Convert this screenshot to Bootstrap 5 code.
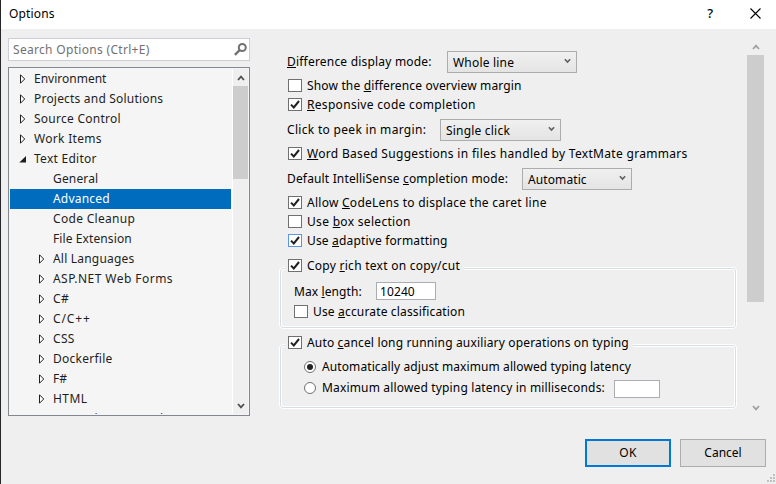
<!DOCTYPE html>
<html lang="en">
<head>
<meta charset="utf-8">
<title>Options</title>
<meta name="viewport" content="width=device-width, initial-scale=1">
<link href="https://cdn.jsdelivr.net/npm/bootstrap@5.3.0/dist/css/bootstrap.min.css" rel="stylesheet">
<style>
body{font-family:"Noto Sans","Open Sans",sans-serif;font-size:12px;line-height:19px;letter-spacing:.2px;color:#000;background:#efefef}
.dialog{width:776px;height:484px;border-left:1px solid #26262a;background:#efefef}
.titlebar{height:29px;padding:0 15px 2px 8px}
.titlebar svg{display:block}
.help{font-size:13px;font-weight:500;margin-right:33px}
.search{height:23px;border:1px solid #ccceda;background:#fff;color:#717171;padding:0 2px 0 4px}
.side{width:242px;margin-left:7px;padding-top:9px}
.tree{height:349px;margin-top:6px;border:1px solid #828790;background:#f5f5f5;padding:1px}
.tree-list{width:221px;height:345px;color:#1e1e1e}
.tree-item{height:20px;line-height:20px;padding-left:9px;white-space:nowrap}
.tree-item svg{width:9px;height:10px;margin-right:6px;flex:none}
.tree-item.child{padding-left:28px}
.tree-item.chosen{background:#006cbe;color:#fff}
.tree-bar{width:16px;margin-left:1px;border-left:1px solid #fff;background:#efefef;padding:6px 0 5px}
.tree-bar .thumb{width:15px;height:93px;margin-top:5px;background:#cdcdcd}
.options{width:458px;margin-left:29px;padding-top:22px}
.line{height:19px;padding-left:9px;white-space:nowrap}
.line>span:last-child{padding-bottom:1px}
.combo-line{height:22px;padding-left:8px;white-space:nowrap}
.combo-line>span{padding-bottom:2px}
.after-combo{margin-top:3px}
.before-combo{margin-top:5px}
.lbl-diff{width:160px}.lbl-peek{width:153px}.lbl-sense{width:235px}
.combo{height:22px;border:1px solid #acacac;background:linear-gradient(#f0f0f0,#e4e4e4);padding:0 5px}
.combo-a{width:130px}.combo-b{width:121px}.combo-c{width:110px}
.combo svg{margin-bottom:3px}
.box{width:14px;height:13px;border:1px solid #707070;background:#fff;margin-right:5px;flex:none}
.box svg{display:block;width:12px;height:11px}
.box.hot{border-color:#5a96e8}
.radio{width:12px;height:12px;border:1px solid #707070;border-radius:50%;background:#fff;margin-right:6px;flex:none}
.radio i{width:6px;height:6px;border-radius:50%;background:#212121}
.radio-line{height:21px}
.group-title{position:relative;z-index:1;width:max-content;margin-left:6px;padding:0 4px 0 3px;background:#efefef}
.gap-a{margin-top:6px}.gap-b{margin-top:4px}
.group-box{margin-top:-8px;border:1px solid #fff;border-radius:4px;box-shadow:inset 0 0 0 1px #d5dfe5,inset 0 0 0 2px #fff;white-space:nowrap}
.group-a{height:62px;padding:14px 0 0 14px}
.group-b{height:65px;padding:11px 0 0 24px}
.field{height:18px;border:1px solid #abadb3;background:#fff;padding-left:3px;line-height:17px}
.field-line{height:18px}
.accurate{height:19px;margin-top:2px}
.lbl-max{width:82px}
.field-a{width:60px}.field-b{width:46px;margin-top:3px}
.lbl-ms{width:292px}
.pane-bar{width:17px;margin-left:10px;padding-top:15px}
.pane-bar .thumb{width:17px;height:247px;margin:5px 0 103px;background:#cdcdcd}
.dlg-btn{width:86px;height:28px;padding:0;border:1px solid #adadad;border-radius:0;background:#e1e1e1;color:#000;font-size:12px;line-height:24px}
.dlg-btn.primary{border:2px solid #0078d7}
.main-area{height:410px}
.footer-bar{height:45px;padding-right:10px;gap:9px;position:relative}
.grip{position:absolute;right:0;bottom:1px}
.t0{letter-spacing:0}.t1{letter-spacing:.1px}.t15{letter-spacing:.16px}.t25{letter-spacing:.26px}.t3{letter-spacing:.31px}.t4{letter-spacing:.45px}.t9{letter-spacing:.9px}
u{text-underline-offset:1px;text-decoration-thickness:1px;text-decoration-skip-ink:none}
</style>
<script src="https://cdn.jsdelivr.net/npm/bootstrap@5.3.0/dist/js/bootstrap.bundle.min.js"></script>
</head>
<body>
<svg class="d-none">
  <symbol id="closed" viewBox="0 0 9 10"><path d="M1.500.8v8.400l4.200-4.200z" fill="#fff" stroke="#1e1e1e"/></symbol>
  <symbol id="open" viewBox="0 0 9 10"><path d="M7 2v6.500H.3z" fill="#1e1e1e"/></symbol>
  <symbol id="tick" viewBox="0 0 12 11"><path d="M2 5.600 4.800 8.400 10 2" fill="none" stroke="#212121" stroke-width="2"/></symbol>
  <symbol id="down" viewBox="0 0 8 6"><path d="M1 1 4 4.300 7 1" fill="none" stroke="currentColor" stroke-width="1.800"/></symbol>
  <symbol id="up" viewBox="0 0 8 6"><path d="M1 5 4 1.700 7 5" fill="none" stroke="currentColor" stroke-width="1.800"/></symbol>
</svg>
<div class="dialog d-flex flex-column overflow-hidden">
  <header class="titlebar bg-white d-flex align-items-center">
    <span class="t15 me-auto">Options</span>
    <span class="help t0">?</span>
    <svg class="ms-1" width="11" height="11" viewBox="0 0 11 11"><path d="M.5.5l10 10M10.500.5l-10 10" stroke="#000" stroke-width="1.100"/></svg>
  </header>
  <main class="main-area d-flex">
    <aside class="side">
      <div class="search d-flex align-items-center justify-content-between">
        <span class="t3">Search Options (Ctrl+E)</span>
        <svg width="13" height="13" viewBox="0 0 13 13" fill="none" stroke="#717171"><circle cx="8.300" cy="4.500" r="3.500" stroke-width="2"/><path d="M5.600 7.200.9 11.800" stroke-width="2.400"/></svg>
      </div>
      <div class="tree d-flex">
        <div class="tree-list overflow-hidden">
          <div class="tree-item d-flex align-items-center"><svg><use href="#closed"/></svg><span class="t0">Environment</span></div>
          <div class="tree-item d-flex align-items-center"><svg><use href="#closed"/></svg><span>Projects and Solutions</span></div>
          <div class="tree-item d-flex align-items-center"><svg><use href="#closed"/></svg><span class="t25">Source Control</span></div>
          <div class="tree-item d-flex align-items-center"><svg><use href="#closed"/></svg><span class="t3">Work Items</span></div>
          <div class="tree-item d-flex align-items-center"><svg><use href="#open"/></svg><span class="t25">Text Editor</span></div>
          <div class="tree-item child d-flex align-items-center"><svg></svg><span class="t15">General</span></div>
          <div class="tree-item child chosen d-flex align-items-center"><svg></svg><span>Advanced</span></div>
          <div class="tree-item child d-flex align-items-center"><svg></svg><span class="t3">Code Cleanup</span></div>
          <div class="tree-item child d-flex align-items-center"><svg></svg><span class="t1">File Extension</span></div>
          <div class="tree-item child d-flex align-items-center"><svg><use href="#closed"/></svg><span>All Languages</span></div>
          <div class="tree-item child d-flex align-items-center"><svg><use href="#closed"/></svg><span class="t4">ASP.NET Web Forms</span></div>
          <div class="tree-item child d-flex align-items-center"><svg><use href="#closed"/></svg><span class="t3">C#</span></div>
          <div class="tree-item child d-flex align-items-center"><svg><use href="#closed"/></svg><span class="t9">C/C++</span></div>
          <div class="tree-item child d-flex align-items-center"><svg><use href="#closed"/></svg><span class="t3">CSS</span></div>
          <div class="tree-item child d-flex align-items-center"><svg><use href="#closed"/></svg><span class="t25">Dockerfile</span></div>
          <div class="tree-item child d-flex align-items-center"><svg><use href="#closed"/></svg><span class="t0">F#</span></div>
          <div class="tree-item child d-flex align-items-center"><svg><use href="#closed"/></svg><span class="t4">HTML</span></div>
          <div class="tree-item child d-flex align-items-center"><svg></svg><span>JavaScript/TypeScript</span></div>
        </div>
        <div class="tree-bar d-flex flex-column align-items-center">
          <svg width="8" height="6" color="#505050"><use href="#up"/></svg>
          <div class="thumb"></div>
          <svg class="mt-auto" width="8" height="6" color="#505050"><use href="#down"/></svg>
        </div>
      </div>
    </aside>
    <section class="options">
      <div class="combo-line d-flex align-items-center"><span class="lbl-diff"><u>D</u>ifference display mode:</span>
        <div class="combo combo-a d-flex align-items-center justify-content-between"><span>Whole line</span><svg width="7" height="6" color="#606060"><use href="#down"/></svg></div></div>
      <div class="line d-flex align-items-center after-combo"><span class="box"></span><span class="t15">Show the <u>d</u>ifference overview margin</span></div>
      <div class="line d-flex align-items-center"><span class="box"><svg><use href="#tick"/></svg></span><span class="t3"><u>R</u>esponsive code completion</span></div>
      <div class="combo-line d-flex align-items-center before-combo"><span class="lbl-peek t3">Click to peek in margin:</span>
        <div class="combo combo-b d-flex align-items-center justify-content-between"><span>Single click</span><svg width="7" height="6" color="#606060"><use href="#down"/></svg></div></div>
      <div class="line d-flex align-items-center after-combo"><span class="box"><svg><use href="#tick"/></svg></span><span class="t3"><u>W</u>ord Based Suggestions in files handled by TextMate grammars</span></div>
      <div class="combo-line d-flex align-items-center before-combo"><span class="lbl-sense t15">Default IntelliSense <u>c</u>ompletion mode:</span>
        <div class="combo combo-c d-flex align-items-center justify-content-between"><span class="t1">Automatic</span><svg width="7" height="6" color="#606060"><use href="#down"/></svg></div></div>
      <div class="line d-flex align-items-center after-combo"><span class="box"><svg><use href="#tick"/></svg></span><span class="t25">Allow <u>C</u>odeLens to displace the caret line</span></div>
      <div class="line d-flex align-items-center"><span class="box"></span><span class="t3">Use <u>b</u>ox selection</span></div>
      <div class="line d-flex align-items-center"><span class="box hot"><svg><use href="#tick"/></svg></span><span class="t15">Use <u>a</u>daptive formatting</span></div>
      <div class="line group-title d-flex align-items-center gap-a"><span class="box"><svg><use href="#tick"/></svg></span><span class="t25">Copy <u>r</u>ich text on copy/cut</span></div>
      <div class="group-box group-a">
        <div class="field-line d-flex align-items-center"><span class="lbl-max t1">Max <u>l</u>ength:</span><div class="field field-a t1">10240</div></div>
        <div class="accurate d-flex align-items-center"><span class="box"></span><span class="t15">Use <u>a</u>ccurate classification</span></div>
      </div>
      <div class="line group-title d-flex align-items-center gap-b"><span class="box"><svg><use href="#tick"/></svg></span><span class="t15">Auto <u>c</u>ancel long running auxiliary operations on typing</span></div>
      <div class="group-box group-b">
        <div class="d-flex align-items-center radio-line"><span class="radio d-flex align-items-center justify-content-center"><i></i></span><span class="t1">Automatically adjust maximum allowed typing latency</span></div>
        <div class="d-flex align-items-center radio-line"><span class="radio"></span><span class="lbl-ms t15">Maximum allowed typing latency in milliseconds:</span><div class="field field-b"></div></div>
      </div>
    </section>
    <div class="pane-bar d-flex flex-column align-items-center">
      <svg width="8" height="6" color="#a0a0a0"><use href="#up"/></svg>
      <div class="thumb"></div>
      <svg width="8" height="6" color="#a0a0a0"><use href="#down"/></svg>
    </div>
  </main>
  <footer class="footer-bar d-flex justify-content-end">
    <button class="btn dlg-btn primary t4">OK</button>
    <button class="btn dlg-btn">Cancel</button>
    <svg class="grip" width="9" height="9" fill="#bfbfbf"><path d="M6 0h2v2H6zM3 3h2v2H3zM6 3h2v2H6zM0 6h2v2H0zM3 6h2v2H3zM6 6h2v2H6z"/></svg>
  </footer>
</div>
</body></html>
